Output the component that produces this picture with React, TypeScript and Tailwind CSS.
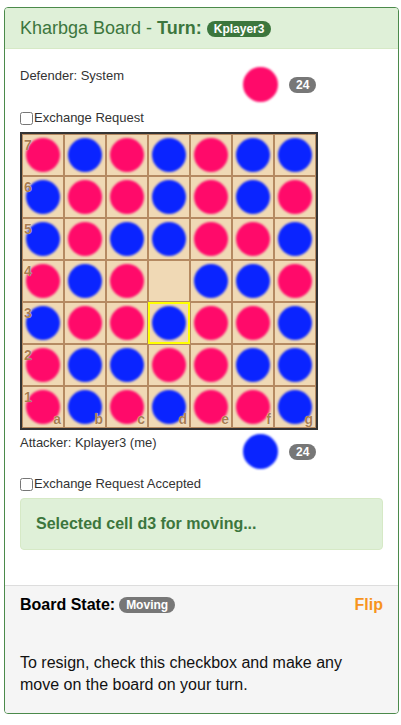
import * as React from "react";

type Piece = "p" | "b" | "";

// rows from 7 (top) down to 1
const BOARD: Piece[][] = [
  ["p", "b", "p", "b", "p", "b", "b"],
  ["b", "p", "p", "b", "p", "b", "p"],
  ["b", "p", "b", "b", "p", "p", "b"],
  ["p", "b", "p", "", "b", "b", "p"],
  ["b", "p", "p", "b", "p", "p", "b"],
  ["p", "b", "b", "p", "p", "b", "b"],
  ["p", "b", "p", "b", "p", "p", "b"],
];

const FILES = ["a", "b", "c", "d", "e", "f", "g"];

function Badge({ children, className }: { children: React.ReactNode; className?: string }) {
  return (
    <span
      className={[
        "inline-block rounded-[10px] px-[7px] py-[2px] text-[12px] font-bold leading-[12px] text-white",
        className ?? "bg-[#777]",
      ].join(" ")}
    >
      {children}
    </span>
  );
}

function Dot({ color }: { color: "p" | "b" }) {
  return (
    <div
      className={[
        "h-[34px] w-[34px] rounded-full blur-[0.8px]",
        color === "p" ? "bg-[#ff0a6a]" : "bg-[#0a24ff]",
      ].join(" ")}
    />
  );
}

function PlayerRow({ label, color }: { label: string; color: "p" | "b" }) {
  return (
    <div className="flex items-start">
      <div className="w-[223px] text-[13px] leading-[18px]">{label}</div>
      <div className="flex items-center gap-[11px]">
        <div
          className={[
            "h-[35px] w-[35px] rounded-full blur-[0.8px]",
            color === "p" ? "bg-[#ff0a6a]" : "bg-[#0a24ff]",
          ].join(" ")}
        />
        <Badge>24</Badge>
      </div>
    </div>
  );
}

function Check({ label }: { label: string }) {
  return (
    <label className="flex items-center text-[13px] leading-[18px]">
      <input type="checkbox" className="m-0 mr-[1px] h-[13px] w-[13px]" />
      {label}
    </label>
  );
}

function Board() {
  return (
    <div className="w-[298px] border-2 border-[#333]">
      <div className="grid grid-cols-7">
        {BOARD.map((row, r) =>
          row.map((cell, c) => {
            const rank = 7 - r;
            const selected = rank === 3 && c === 3;
            return (
              <div
                key={`${r}-${c}`}
                className={[
                  "relative flex h-[42px] w-[42px] items-center justify-center bg-[#f0d9b5]",
                  selected ? "border-2 border-[#ffff00]" : "border border-[#b58a62]",
                ].join(" ")}
              >
                {cell && <Dot color={cell} />}
                {c === 0 && (
                  <span className="absolute left-[1px] top-[3px] z-10 text-[14px] font-bold leading-[14px] text-[#a87d50] [text-shadow:0_0_1px_#fff]">
                    {rank}
                  </span>
                )}
                {rank === 1 && (
                  <span className="absolute bottom-[1px] right-[2px] z-10 text-[14px] font-bold leading-[14px] text-[#a87d50] [text-shadow:0_0_1px_#fff]">
                    {FILES[c]}
                  </span>
                )}
              </div>
            );
          })
        )}
      </div>
    </div>
  );
}

export default function App() {
  return (
    <div className="bg-white pb-[11px] pt-[7px] font-['Liberation_Sans',Arial,sans-serif] text-[#333]">
      <div className="ml-[4px] w-[395px] overflow-hidden rounded-[4px] border border-[#4b8a4b]">
        <div className="border-b border-[#d6e9c6] bg-[#dff0d8] px-[15px] py-[10px] text-[18px] leading-[20px] text-[#3c763d]">
          Kharbga Board - <b>Turn:</b>{" "}
          <Badge className="bg-[#3c763d] align-[1px]">Kplayer3</Badge>
        </div>

        <div className="p-[15px]">
          <div className="mt-[3px]">
            <PlayerRow label="Defender: System" color="p" />
          </div>
          <div className="mt-[7px]">
            <Check label="Exchange Request" />
          </div>
          <div className="mt-[5px]">
            <Board />
          </div>
          <div className="mt-[4px]">
            <PlayerRow label="Attacker: Kplayer3 (me)" color="b" />
          </div>
          <div className="mt-[6px]">
            <Check label="Exchange Request Accepted" />
          </div>
          <div className="mb-[20px] mt-[5px] rounded-[4px] border border-[#d6e9c6] bg-[#dff0d8] p-[15px] text-[16px] font-bold leading-[20px] text-[#3c763d]">
            Selected cell d3 for moving...
          </div>
        </div>

        <div className="border-t border-[#ddd] bg-[#f5f5f5] px-[15px] pb-[17px] pt-[8px]">
          <div className="flex items-center justify-between text-[16px] leading-[22px]">
            <div className="flex items-center gap-[4px]">
              <b className="text-black">Board State:</b>
              <Badge>Moving</Badge>
            </div>
            <b className="text-[#f7941d]">Flip</b>
          </div>
          <p className="mt-[36px] text-[16px] leading-[22px] text-[#111]">
            To resign, check this checkbox and make any move on the board on your turn.
          </p>
        </div>
      </div>
    </div>
  );
}
